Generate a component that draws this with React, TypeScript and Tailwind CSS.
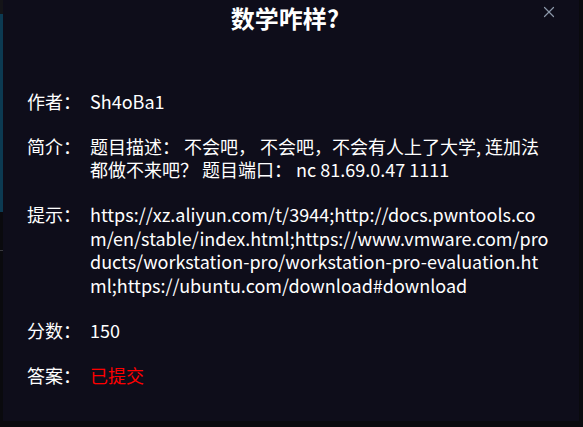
import { X } from 'lucide-react';

const rows: { label: string; value: string; red?: boolean }[] = [
  { label: '作者：', value: 'Sh4oBa1' },
  {
    label: '简介：',
    value: '题目描述： 不会吧， 不会吧，不会有人上了大学, 连加法都做不来吧？ 题目端口： nc 81.69.0.47 1111',
  },
  {
    label: '提示：',
    value:
      'https://xz.aliyun.com/t/3944;http://docs.pwntools.com/en/stable/index.html;https://www.vmware.com/products/workstation-pro/workstation-pro-evaluation.html;https://ubuntu.com/download#download',
  },
  { label: '分数：', value: '150' },
  { label: '答案：', value: '已提交', red: true },
];

export default function App() {
  return (
    <div
      className="flex h-[427px] w-[583px] overflow-hidden bg-[#0a0a0e]"
      style={{ fontFamily: '"Noto Sans CJK SC", "Noto Sans", sans-serif' }}
    >
      {/* page behind the overlay */}
      <div className="flex w-[3px] flex-col">
        <div className="h-[14px] bg-[#141418]" />
        <div className="h-[198px] bg-[#0c3a52]" />
        <div className="mt-[38px] h-px bg-[#3a3a40]" />
      </div>

      <div className="relative flex h-[421px] w-[576px] flex-col bg-[#0e0d1a] text-white">
        <div className="pr-[12px] pt-[2px] text-center text-[24px] font-bold leading-[32px]">数学咋样?</div>
        <button className="absolute right-[21px] top-[3px] text-[#8b97a9]">
          <X className="h-[18px] w-[18px]" strokeWidth={1.6} />
        </button>

        <div className="flex flex-col pl-[24px] pr-[29px] pt-[56px] text-[18px] leading-[1.3]">
          {rows.map((r) => (
            <div key={r.label} className="mb-[21.6px] flex">
              <span className="w-[63px] shrink-0">{r.label}</span>
              <span className={`min-w-0 flex-1 break-all ${r.red ? 'text-[#ff0000]' : ''}`}>{r.value}</span>
            </div>
          ))}
        </div>
      </div>
    </div>
  );
}
